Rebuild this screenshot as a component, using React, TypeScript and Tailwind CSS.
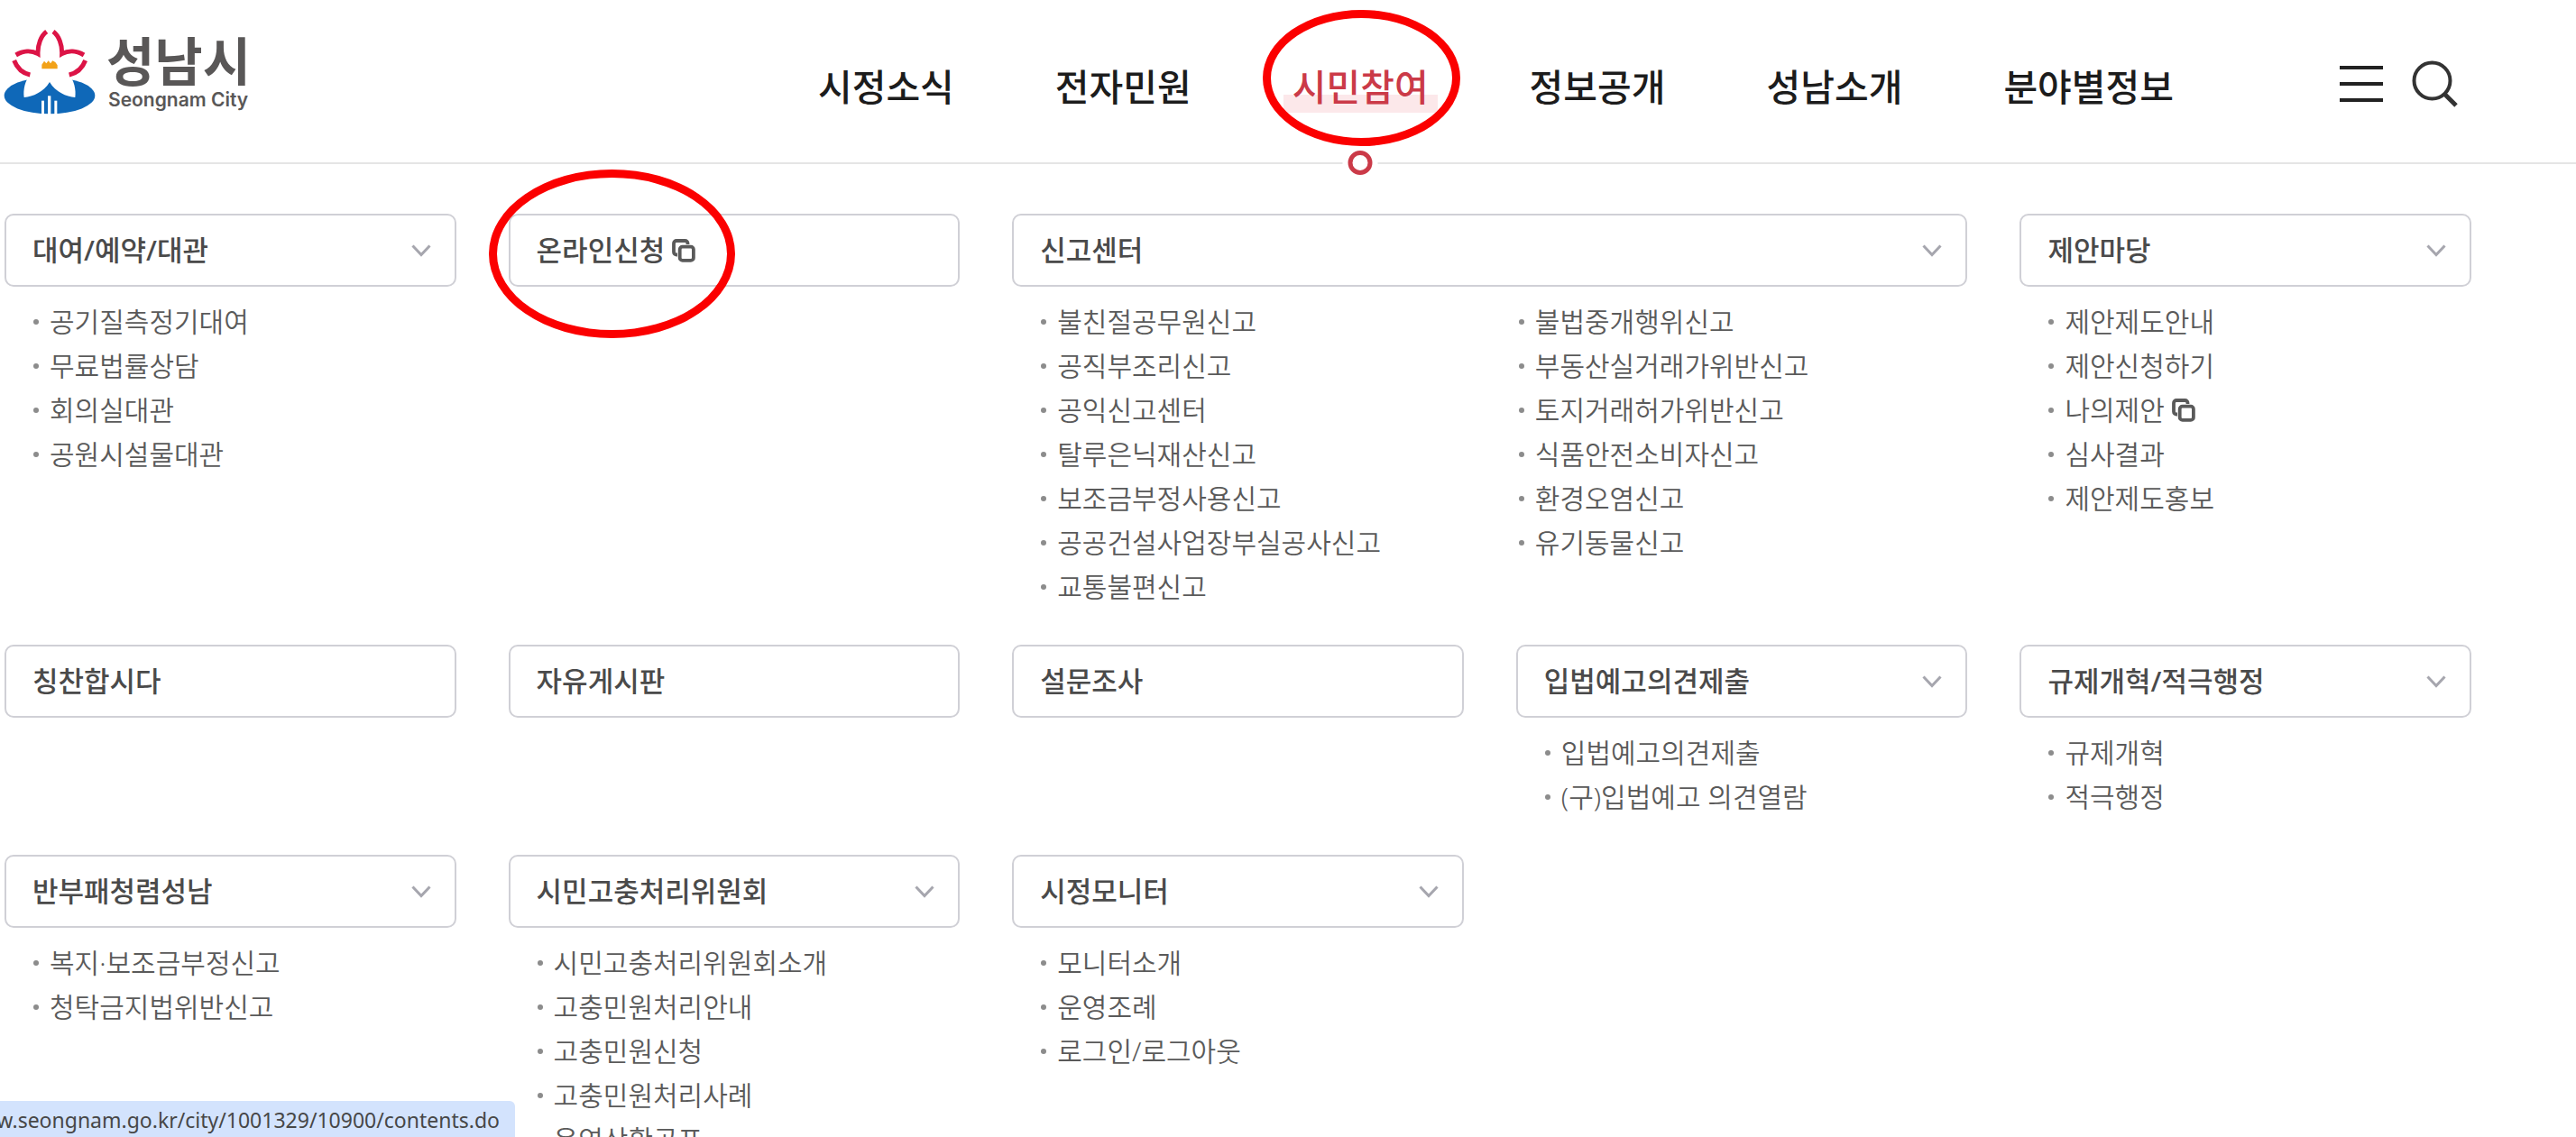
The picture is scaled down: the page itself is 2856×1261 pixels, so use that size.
import clsx from 'clsx';

type SubItem = { label: string; external?: boolean };

type MenuGroup = {
  title: string;
  items?: SubItem[];
  wide?: boolean;
  external?: boolean;
  marked?: boolean;
};

const navItems = ['시정소식', '전자민원', '시민참여', '정보공개', '성남소개', '분야별정보'];
const activeNav = '시민참여';

const menuGroups: MenuGroup[] = [
  {
    title: '대여/예약/대관',
    items: [
      { label: '공기질측정기대여' },
      { label: '무료법률상담' },
      { label: '회의실대관' },
      { label: '공원시설물대관' },
    ],
  },
  { title: '온라인신청', external: true, marked: true },
  {
    title: '신고센터',
    wide: true,
    items: [
      { label: '불친절공무원신고' },
      { label: '공직부조리신고' },
      { label: '공익신고센터' },
      { label: '탈루은닉재산신고' },
      { label: '보조금부정사용신고' },
      { label: '공공건설사업장부실공사신고' },
      { label: '교통불편신고' },
      { label: '불법중개행위신고' },
      { label: '부동산실거래가위반신고' },
      { label: '토지거래허가위반신고' },
      { label: '식품안전소비자신고' },
      { label: '환경오염신고' },
      { label: '유기동물신고' },
    ],
  },
  {
    title: '제안마당',
    items: [
      { label: '제안제도안내' },
      { label: '제안신청하기' },
      { label: '나의제안', external: true },
      { label: '심사결과' },
      { label: '제안제도홍보' },
    ],
  },
  { title: '칭찬합시다' },
  { title: '자유게시판' },
  { title: '설문조사' },
  {
    title: '입법예고의견제출',
    items: [{ label: '입법예고의견제출' }, { label: '(구)입법예고 의견열람' }],
  },
  {
    title: '규제개혁/적극행정',
    items: [{ label: '규제개혁' }, { label: '적극행정' }],
  },
  {
    title: '반부패청렴성남',
    items: [{ label: '복지·보조금부정신고' }, { label: '청탁금지법위반신고' }],
  },
  {
    title: '시민고충처리위원회',
    items: [
      { label: '시민고충처리위원회소개' },
      { label: '고충민원처리안내' },
      { label: '고충민원신청' },
      { label: '고충민원처리사례' },
      { label: '운영상황공표' },
    ],
  },
  {
    title: '시정모니터',
    items: [{ label: '모니터소개' }, { label: '운영조례' }, { label: '로그인/로그아웃' }],
  },
];

function Emblem() {
  return (
    <svg viewBox="12 100 306 282" className="h-[94px] w-[102px]" aria-hidden="true">
      <ellipse cx="165" cy="319" rx="151" ry="61" fill="#0f68b8" />
      {/* 꽃잎 */}
      <path
        d="M165 104 C135 108 127 150 133 183 C112 160 70 160 50 184 C36 204 60 240 100 250 C84 268 76 300 80 325 C110 322 145 308 165 274 C185 308 220 322 250 325 C254 300 246 268 230 250 C270 240 296 204 280 184 C260 160 218 160 201 183 C204 150 196 108 165 104 Z"
        fill="#fff"
      />
      <g fill="none" stroke="#dc1446" strokeWidth="15">
        <path d="M155 106 C136 120 125 150 126 180 C104 168 76 170 53 184" />
        <path d="M177 106 C196 120 207 150 206 180 C228 168 256 170 279 184" />
        <path d="M47 202 C56 226 74 244 100 250" />
        <path d="M284 202 C275 226 256 244 230 250" />
      </g>
      <path d="M139 230 V216 L147 204 L154 212 L161 203 L168 212 L175 203 L184 208 L191 218 V230 Z" fill="#f2a218" />
      <g fill="#fff">
        <rect x="138" y="336" width="9" height="46" />
        <rect x="159" y="320" width="10" height="62" />
        <rect x="181" y="336" width="9" height="46" />
      </g>
    </svg>
  );
}

function CopyIcon() {
  return (
    <svg viewBox="0 0 26 26" className="h-[26px] w-[26px] shrink-0" fill="none" stroke="#5a5a5a" strokeWidth="3.8">
      <rect x="8.7" y="8.7" width="15.2" height="15.2" rx="3" />
      <path d="M6 17.5 H5 A3 3 0 0 1 2 14.5 V5 A3 3 0 0 1 5 2 H14.5 A3 3 0 0 1 17.5 5 V6" />
    </svg>
  );
}

function Chevron() {
  return (
    <svg viewBox="0 0 22 14" className="h-[14px] w-[22px]" fill="none" stroke="#a6a6ae" strokeWidth="3">
      <path d="M1.5 1.5 L11 11.5 L20.5 1.5" />
    </svg>
  );
}

function MenuCard({ group }: { group: MenuGroup }) {
  return (
    <section className={clsx(group.wide && 'col-span-2')}>
      <a
        href="#"
        className="relative flex h-[81px] items-center justify-between rounded-[10px] border-2 border-[#d0d0d6] pr-[26px] pl-[29px] text-[31px] font-medium text-[#4a4a4a]"
      >
        <span className="flex items-center gap-[8px]">
          {group.title}
          {group.external && <CopyIcon />}
        </span>
        {group.items && <Chevron />}
        {group.marked && (
          <span className="absolute -top-[51px] -left-[24px] h-[187px] w-[273px] rounded-[50%] border-[9px] border-[#fb0000]" />
        )}
      </a>
      {group.items && (
        <ul className={clsx('mt-[14px]', group.wide && 'columns-2 gap-0')}>
          {group.items.map((item) => (
            <li key={item.label} className="flex h-[49px] items-center gap-[12px] pl-[32px]">
              <span className="size-[6px] rounded-full bg-[#8c8c8c]" />
              <a href="#" className="flex items-center gap-[8px] text-[30px] leading-[49px] font-[350] text-[#5a5a5a]">
                {item.label}
                {item.external && <CopyIcon />}
              </a>
            </li>
          ))}
        </ul>
      )}
    </section>
  );
}

export default function App() {
  return (
    <div className="h-screen overflow-hidden bg-white font-['Noto_Sans','Noto_Sans_CJK_KR',sans-serif]">
      <header className="flex h-[182px] items-center border-b-2 border-[#e5e5e5] pr-[130px] pl-[4px]">
        <a href="#" className="mb-[20px] flex items-center gap-[12px] text-[#595757]">
          <Emblem />
          <span className="flex flex-col pt-[2px]">
            <span className="text-[58px] leading-[60px] font-bold">성남시</span>
            <span className="pl-[2px] font-['Inter',sans-serif] text-[21px] leading-[26px] font-semibold">Seongnam City</span>
          </span>
        </a>

        <nav className="ml-auto flex gap-[112px]">
          {navItems.map((name) => (
            <a
              key={name}
              href="#"
              className={clsx(
                'relative flex h-[180px] items-center pt-[13px] text-[41px] font-medium',
                name === activeNav ? 'text-[#cb3a48]' : 'text-[#1c1c1c]'
              )}
            >
              {name === activeNav && (
                <>
                  <span className="absolute top-[105px] -right-[10px] -left-[10px] h-[20px] bg-[#fce8ea]" />
                  <span className="absolute top-[11px] -left-[33px] h-[151px] w-[219px] rounded-[50%] border-[9px] border-[#fb0000]" />
                  <span className="absolute top-[167px] left-1/2 flex h-[27px] w-[39px] -translate-x-1/2 justify-center bg-white">
                    <span className="size-[27px] rounded-full border-[5px] border-[#cb3a48]" />
                  </span>
                </>
              )}
              <span className="relative">{name}</span>
            </a>
          ))}
        </nav>

        <div className="mt-[6px] ml-[184px] flex items-center gap-[32px]">
          <button type="button" aria-label="전체메뉴" className="flex w-[48px] flex-col gap-[14px]">
            <span className="h-[4px] bg-[#222]" />
            <span className="h-[4px] bg-[#222]" />
            <span className="h-[4px] bg-[#222]" />
          </button>
          <button type="button" aria-label="검색">
            <svg viewBox="0 0 52 52" className="size-[52px]" fill="none" stroke="#333" strokeWidth="4">
              <circle cx="22.5" cy="22.5" r="20" />
              <path d="M37 38 L49 50" strokeWidth="5" />
            </svg>
          </button>
        </div>
      </header>

      <main className="grid grid-cols-5 gap-x-[58px] gap-y-[40px] pt-[55px] pr-[116px] pl-[5px]">
        {menuGroups.map((group) => (
          <MenuCard key={group.title} group={group} />
        ))}
      </main>

      {/* 브라우저 상태 표시줄 */}
      <div className="fixed bottom-0 left-0 flex h-[40px] w-[571px] items-center justify-end overflow-hidden rounded-tr-[6px] bg-[#d3e3fd] pt-[2px] pr-[17px] text-[23px] whitespace-nowrap text-[#474747]">
        www.seongnam.go.kr/city/1001329/10900/contents.do
      </div>
    </div>
  );
}
